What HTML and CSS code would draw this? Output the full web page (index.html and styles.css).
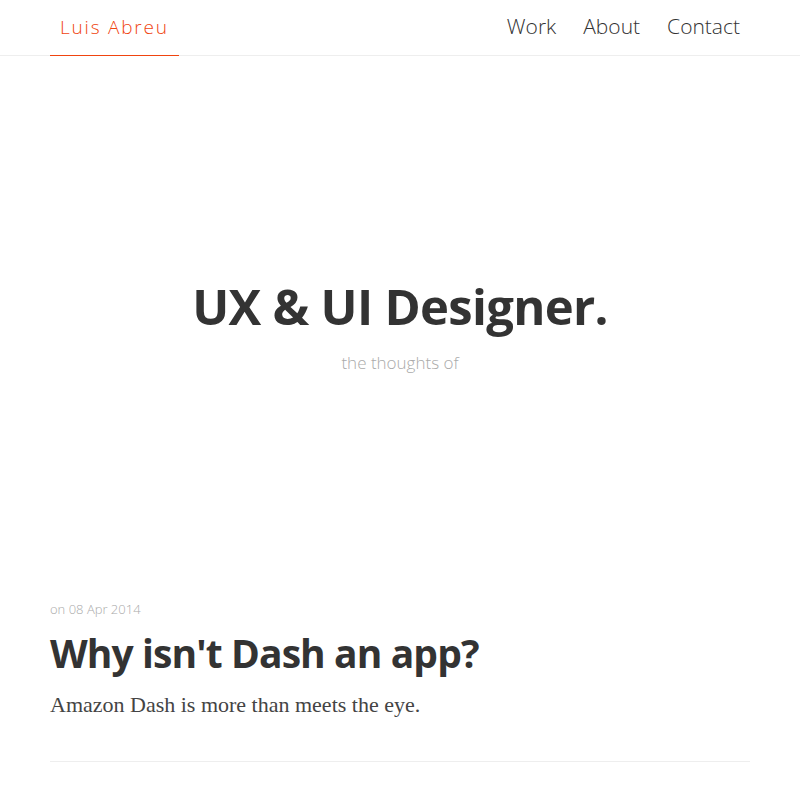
FILE: index.html
```html
<!DOCTYPE html>
<html>
<head>
<meta charset="utf-8">
<link rel="stylesheet" href="styles.css">
</head>
<body>
<header class="site-header">
  <div class="header-inner">
    <a class="logo" href="#">Luis Abreu</a>
    <nav class="nav">
      <a href="#">Work</a>
      <a href="#">About</a>
      <a href="#">Contact</a>
    </nav>
  </div>
</header>
<section class="hero">
  <h1 class="hero-title">UX &amp; UI Designer.</h1>
  <p class="hero-sub">the thoughts of</p>
</section>
<main class="posts">
  <article class="post">
    <div class="post-date">on 08 Apr 2014</div>
    <h2 class="post-title">Why isn't Dash an app?</h2>
    <p class="post-excerpt">Amazon Dash is more than meets the eye.</p>
  </article>
</main>
</body>
</html>
```
FILE: styles.css
```css
* { box-sizing: border-box; }
html, body { margin: 0; padding: 0; background: #fff; }
body { font-family: "Open Sans", sans-serif; color: #333; }
a { text-decoration: none; }
.site-header { border-bottom: 1px solid #eee; height: 56px; }
.header-inner { width: 700px; margin: 0 auto; display: flex; justify-content: space-between; align-items: stretch; height: 56px; }
.logo { color: #f0440f; font-weight: 300; font-size: 19px; letter-spacing: 1.8px; padding: 13px 0 0 10px; width: 129px; white-space: nowrap; border-bottom: 1px solid #f0440f; height: 56px; line-height: 28px; }
.nav { display: flex; gap: 27px; padding: 11px 10px 0 0; }
.nav a { color: #333; font-weight: 300; font-size: 21px; line-height: 30px; }
.hero { height: 500px; display: flex; flex-direction: column; justify-content: center; align-items: center; padding-top: 37px; }
.hero-title { margin: 0; font-size: 49px; font-weight: 700; color: #333; letter-spacing: -0.7px; line-height: 60px; }
.hero-sub { margin: 15px 0 0; font-size: 17px; font-weight: 300; color: #aaa; }
.posts { width: 700px; margin: 0 auto; }
.post { padding-top: 44px; border-bottom: 1px solid #eee; padding-bottom: 43px; }
.post-date { font-size: 13px; color: #aaa; font-weight: 300; }
.post-title { margin: 10px 0 0; font-size: 39px; font-weight: 700; line-height: 50px; color: #333; letter-spacing: -0.9px; }
.post-excerpt { margin: 14px 0 0; font-family: "Liberation Serif", serif; font-size: 22px; color: #444; }
```
